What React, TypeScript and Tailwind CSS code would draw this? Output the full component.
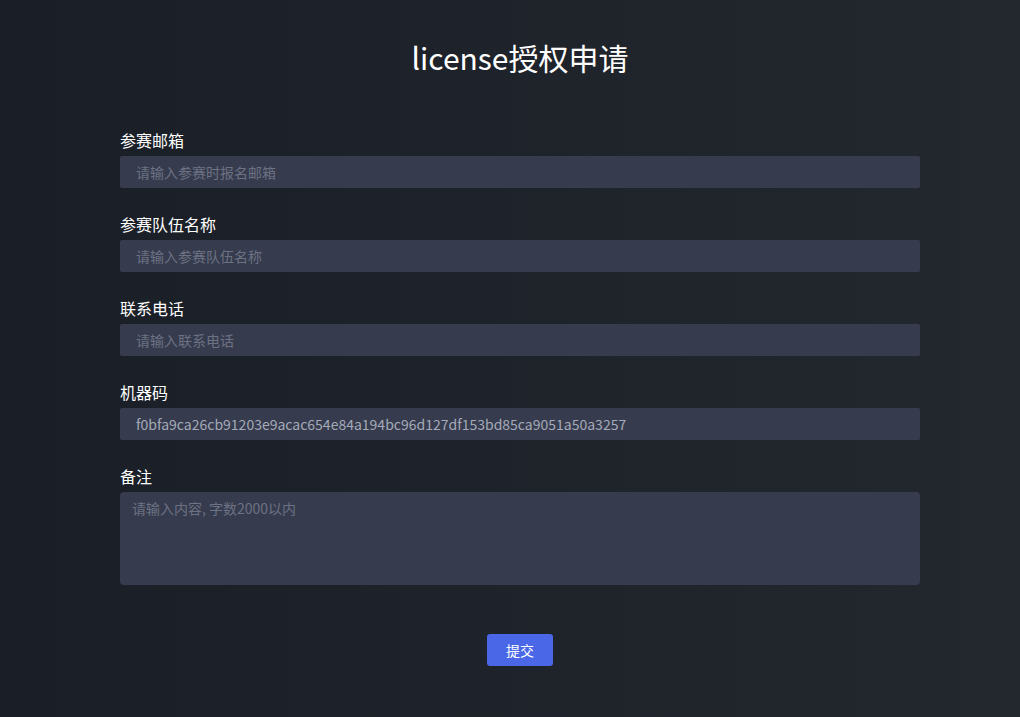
const fields = [
  { label: '参赛邮箱', placeholder: '请输入参赛时报名邮箱', value: '' },
  { label: '参赛队伍名称', placeholder: '请输入参赛队伍名称', value: '' },
  { label: '联系电话', placeholder: '请输入联系电话', value: '' },
  { label: '机器码', placeholder: '', value: 'f0bfa9ca26cb91203e9acac654e84a194bc96d127df153bd85ca9051a50a3257' },
];

export default function App() {
  return (
    <div
      className="min-h-[717px] w-full bg-gradient-to-r from-[#1a1e26] to-[#23272e]"
      style={{ fontFamily: '"Noto Sans CJK SC", "Noto Sans", sans-serif' }}
    >
      <div className="w-[800px] ml-[120px] pt-[35px] pb-[51px]">
        <h1 className="text-center text-[30px] leading-[44px] text-white">license授权申请</h1>

        <form className="mt-[49px]" onSubmit={e => e.preventDefault()}>
          {fields.map(({ label, placeholder, value }) => (
            <div key={label} className="mb-[24px]">
              <label className="block text-[16px] leading-[24px] text-white mb-[4px]">{label}</label>
              <input
                defaultValue={value}
                placeholder={placeholder}
                className="block w-full h-[32px] rounded-[2px] bg-[#363b4e] px-[16px] text-[14px] text-[#a4aab8] placeholder:text-[#6c7283] outline-none"
              />
            </div>
          ))}

          <div>
            <label className="block text-[16px] leading-[24px] text-white mb-[4px]">备注</label>
            <textarea
              placeholder="请输入内容, 字数2000以内"
              className="block w-full h-[93px] resize-none rounded-[4px] bg-[#363b4e] px-[12px] py-[5px] text-[14px] leading-[22px] text-[#a4aab8] placeholder:text-[#6c7283] outline-none"
            />
          </div>

          <div className="flex justify-center mt-[49px]">
            <button
              type="submit"
              className="w-[66px] h-[32px] rounded-[3px] bg-[#4a67e8] text-[14px] text-white"
            >
              提交
            </button>
          </div>
        </form>
      </div>
    </div>
  );
}
